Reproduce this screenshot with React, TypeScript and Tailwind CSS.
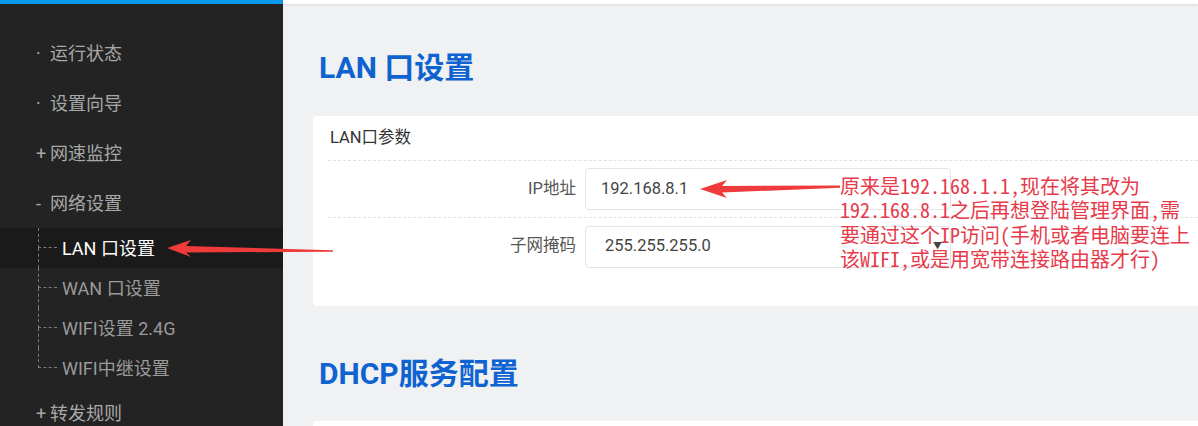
import React from "react";

const sans = { fontFamily: 'Roboto, "Noto Sans CJK SC", sans-serif' };

function MainItem({ prefix, label }: { prefix: string; label: string }) {
  return (
    <div className="flex h-[50px] shrink-0 items-center pl-[36px] text-[18px] text-[#a8a8a8]">
      <span className="w-[14px]">{prefix}</span>
      <span>{label}</span>
    </div>
  );
}

function SubItem({ label, active, last }: { label: string; active?: boolean; last?: boolean }) {
  return (
    <div className={`flex h-[40px] shrink-0 items-stretch pl-[38px] ${active ? "bg-[#1a1a1a]" : ""}`}>
      <div className="flex w-[19px] flex-col">
        <div className="h-[20px] border-b border-l border-dashed border-[#7a7a7a]" />
        <div className={`flex-1 ${last ? "" : "border-l border-dashed border-[#7a7a7a]"}`} />
      </div>
      <div className={`ml-[5px] flex items-center text-[18px] ${active ? "text-white" : "text-[#9a9a9a]"}`}>
        {label}
      </div>
    </div>
  );
}

export default function App() {
  return (
    <div className="relative flex h-[426px] w-[1198px] overflow-hidden bg-[#eff1f3]" style={sans}>
      <aside className="flex h-full w-[283px] shrink-0 flex-col bg-[#232323]">
        <div className="h-[4px] shrink-0 bg-[#0b9bea]" />
        <nav className="pt-[24px]">
          <MainItem prefix="·" label="运行状态" />
          <MainItem prefix="·" label="设置向导" />
          <MainItem prefix="+" label="网速监控" />
          <MainItem prefix="-" label="网络设置" />
          <SubItem label="LAN 口设置" active />
          <SubItem label="WAN 口设置" />
          <SubItem label="WIFI设置 2.4G" />
          <SubItem label="WIFI中继设置" last />
          <MainItem prefix="+" label="转发规则" />
        </nav>
      </aside>

      <main className="flex min-w-0 flex-1 flex-col overflow-hidden">
        <div className="h-[4px] shrink-0 bg-white shadow-[0_1px_3px_rgba(0,0,0,0.1)]" />
        <div className="pl-[30px]">
          <h1 className="ml-[6px] mt-[46px] text-[30px] font-bold leading-[36px] text-[#0e63d0]">LAN 口设置</h1>
          <section className="mt-[30px] w-[900px] rounded-[4px] bg-white px-[15px] pb-[31px]">
            <div className="flex h-[45px] items-center border-b border-dashed border-[#e2e2e2] pl-[2px] text-[16.5px] text-[#333]">
              LAN口参数
            </div>
            <div className="flex h-[57px] items-center border-b border-dashed border-[#e2e2e2]">
              <div className="w-[248px] text-right text-[16.5px] text-[#555]">IP地址</div>
              <div className="ml-[9px] flex h-[42px] w-[366px] items-center rounded-[4px] border border-[#e4e4e4] pl-[15px] text-[16.5px] text-[#444]">
                192.168.8.1
              </div>
            </div>
            <div className="flex h-[57px] items-center">
              <div className="w-[248px] text-right text-[16.5px] text-[#555]">子网掩码</div>
              <div className="ml-[9px] flex h-[42px] w-[366px] items-center justify-between rounded-[4px] border border-[#e4e4e4] pl-[19px] pr-[8px] text-[16.5px] text-[#444]">
                <span>255.255.255.0</span>
                <span className="text-[9px] text-[#444]">▼</span>
              </div>
            </div>
          </section>
          <h1 className="ml-[6px] mt-[50px] text-[30px] font-bold leading-[36px] text-[#0e63d0]">DHCP服务配置</h1>
          <section className="mt-[29px] h-[60px] w-[900px] rounded-[4px] bg-white" />
        </div>
      </main>

      <svg className="pointer-events-none absolute inset-0" width="1198" height="426" viewBox="0 0 1198 426">
        <polygon points="700,189 727,180 722,186 840,185.5 840,187.8 722,192.5 727,198" fill="#ef3b3b" />
        <polygon points="167,248 191,240 186,246 333,250.3 333,251.7 186,252.5 191,257" fill="#ef3b3b" />
      </svg>

      <div
        className="pointer-events-none absolute left-[840px] top-[174px] whitespace-pre text-[20px] leading-[24.4px] text-[#e63b4b]"
        style={{ fontFamily: '"Noto Sans Mono CJK SC", "Liberation Mono", "Noto Sans CJK SC", monospace' }}
      >
        {"原来是192.168.1.1,现在将其改为\n192.168.8.1之后再想登陆管理界面,需\n要通过这个IP访问(手机或者电脑要连上\n该WIFI,或是用宽带连接路由器才行)"}
      </div>
    </div>
  );
}
